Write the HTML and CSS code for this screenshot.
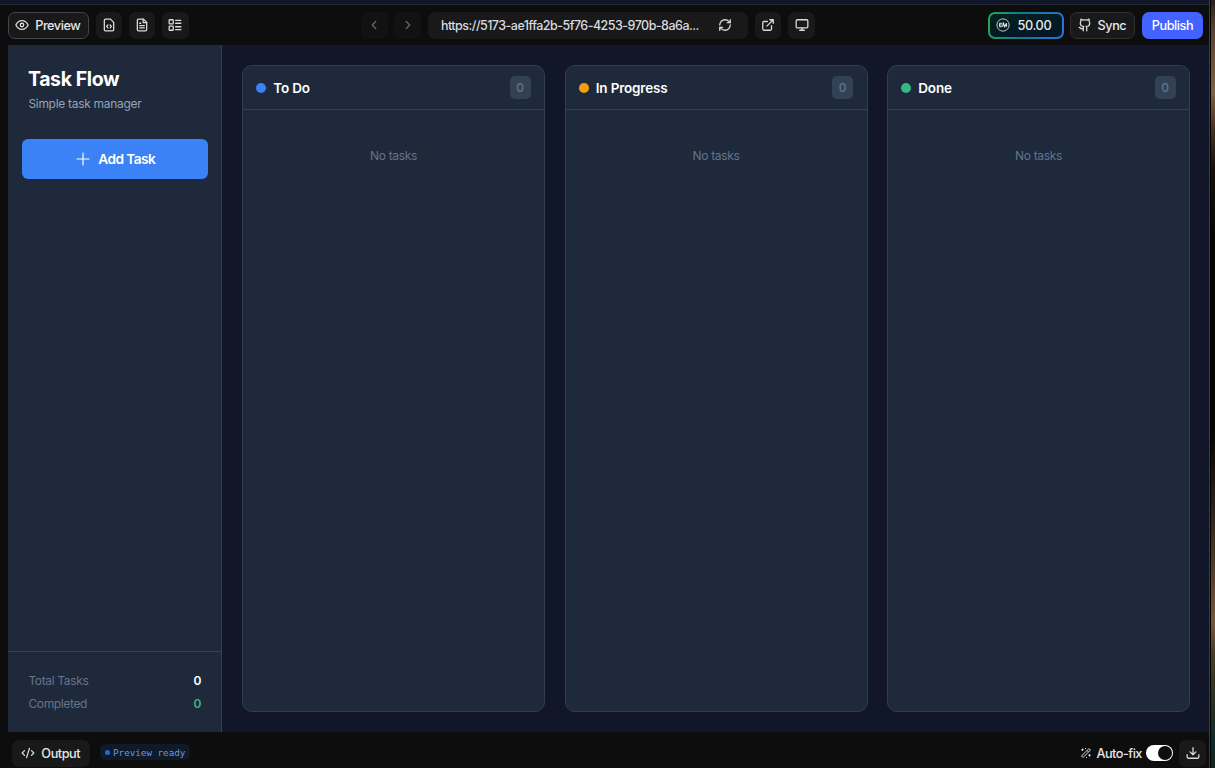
FILE: index.html
```html
<!DOCTYPE html>
<html lang="en">
<head>
<meta charset="utf-8">
<title>Task Flow</title>
<link rel="stylesheet" href="styles.css">
</head>
<body>
<div class="desktop">
<div class="window">
  <div class="top-strip"></div>
  <header class="toolbar">
    <div class="group left">
      <button class="btn preview"><svg class="icon" viewBox="0 0 24 24"><path d="M1.500 12s3.500-7.500 10.500-7.500S22.500 12 22.500 12s-3.500 7.500-10.500 7.500S1.500 12 1.500 12z"/><circle cx="12" cy="12" r="3"/></svg><span>Preview</span></button>
      <button class="btn square"><svg class="icon" viewBox="0 0 24 24"><path d="M14.500 2H6a2 2 0 0 0-2 2v16a2 2 0 0 0 2 2h12a2 2 0 0 0 2-2V7.500z"/><path d="M10 12l-2 2.500 2 2.500M14 12l2 2.500-2 2.500"/></svg></button>
      <button class="btn square"><svg class="icon" viewBox="0 0 24 24"><path d="M14.500 2H6a2 2 0 0 0-2 2v16a2 2 0 0 0 2 2h12a2 2 0 0 0 2-2V7.500z"/><path d="M14 2v6h6M8 9h2M8 13h8M8 17h8"/></svg></button>
      <button class="btn square"><svg class="icon" viewBox="0 0 24 24"><rect x="2" y="3" width="7" height="7" rx="1"/><rect x="2" y="14" width="7" height="7" rx="1"/><path d="M13 4h9M13 9h9M13 15h9M13 20h9"/></svg></button>
    </div>
    <div class="group nav">
      <button class="btn square dim"><svg class="icon" viewBox="0 0 24 24"><path d="M15 18l-6-6 6-6"/></svg></button>
      <button class="btn square dim"><svg class="icon" viewBox="0 0 24 24"><path d="M9 18l6-6-6-6"/></svg></button>
      <div class="address"><span>https://5173-ae1ffa2b-5f76-4253-970b-8a6a...</span><svg class="icon" viewBox="0 0 24 24"><path d="M3 12a9 9 0 0 1 9-9 9.750 9.750 0 0 1 6.740 2.740L21 8"/><path d="M21 3v5h-5M21 12a9 9 0 0 1-9 9 9.750 9.750 0 0 1-6.740-2.740L3 16"/><path d="M8 16H3v5"/></svg></div>
      <button class="btn square"><svg class="icon" viewBox="0 0 24 24"><path d="M15 3h6v6M10 14L21 3M18 13v6a2 2 0 0 1-2 2H5a2 2 0 0 1-2-2V8a2 2 0 0 1 2-2h6"/></svg></button>
      <button class="btn square"><svg class="icon" viewBox="0 0 24 24"><rect x="2" y="3" width="20" height="14" rx="2"/><path d="M8 21h8M12 17v4"/></svg></button>
    </div>
    <div class="group right">
      <button class="btn credits"><svg class="coin" viewBox="0 0 24 24"><circle cx="12" cy="12" r="10.500"/><path class="mark" d="M11 9H6.500q-1 3 0 6H10M6 12h4M11 15l2-6 2 6 3-6v6"/></svg><span>50.00</span></button>
      <button class="btn sync"><svg class="icon" viewBox="0 0 24 24"><path d="M15 22v-4a4.800 4.800 0 0 0-1-3.500c3 0 6-2 6-5.500.080-1.250-.270-2.480-1-3.500.280-1.150.280-2.350 0-3.500 0 0-1 0-3 1.500-2.640-.500-5.360-.500-8 0C6 2 5 2 5 2c-.300 1.150-.300 2.350 0 3.500A5.400 5.400 0 0 0 4 9c0 3.500 3 5.500 6 5.500-.390.490-.680 1.050-.850 1.650S8.930 17.380 9 18v4"/><path d="M9 18c-4.510 2-5-2-7-2"/></svg><span>Sync</span></button>
      <button class="btn publish">Publish</button>
    </div>
  </header>
  <div class="app">
    <aside class="sidebar">
      <h1>Task Flow</h1>
      <p class="subtitle">Simple task manager</p>
      <button class="add"><svg viewBox="0 0 14 14"><path d="M7 1v12M1 7h12"/></svg>Add Task</button>
      <div class="stats">
        <div class="stat"><span>Total Tasks</span><b>0</b></div>
        <div class="stat"><span>Completed</span><b class="green">0</b></div>
      </div>
    </aside>
    <main class="board">
      <section class="column"><div class="column-head"><i class="dot blue"></i><h2>To Do</h2><span class="count">0</span></div><p class="empty">No tasks</p></section>
      <section class="column"><div class="column-head"><i class="dot orange"></i><h2>In Progress</h2><span class="count">0</span></div><p class="empty">No tasks</p></section>
      <section class="column"><div class="column-head"><i class="dot emerald"></i><h2>Done</h2><span class="count">0</span></div><p class="empty">No tasks</p></section>
    </main>
  </div>
  <footer class="footer">
    <button class="btn output"><svg class="icon" viewBox="0 0 24 24"><path d="M18 16l4-4-4-4M6 8l-4 4 4 4M14.500 4l-5 16"/></svg><span>Output</span></button>
    <div class="status"><i></i>Preview ready</div>
    <div class="autofix"><svg class="wand" viewBox="0 0 24 24"><path d="M3 18L18 3l3 3L6 21zM14 7l3 3M5 3v5M2.500 5.500h5M19 14v5M16.500 16.500h5M11 2v2M10 3h2M13 20v2"/></svg><span>Auto-fix</span><span class="switch"></span></div>
    <button class="btn square"><svg class="icon" viewBox="0 0 24 24"><path d="M12 3v12M7 10l5 5 5-5M2 15v4a2 2 0 0 0 2 2h16a2 2 0 0 0 2-2v-4"/></svg></button>
  </footer>
</div>
<div class="wallpaper"></div>
</div>
</body>
</html>
```
FILE: styles.css
```css
* { box-sizing: border-box; }
body { margin: 0; font-family: Inter, "Liberation Sans", sans-serif; background: #0d0d0d; color: #e5e7eb; overflow: hidden; }
h1, h2, p { margin: 0; }
button { font: inherit; color: inherit; border: 0; padding: 0; }
.desktop { display: flex; width: 1215px; height: 768px; }
.window { display: flex; flex-direction: column; width: 1210px; border-right: 1px solid #3b3d43; }
.wallpaper { flex: 1; border-left: 1px solid #030303; background: linear-gradient(#2b2119 0, #5b432f 4%, #80603f 12%, #46301f 17%, #16100c 22%, #050403 32%, #080604 57%, #2b2018 66%, #574028 75%, #76573a 81%, #4b3c27 85%, #25301f 92%, #0a2b2b 97%, #172417 100%); }
.top-strip { height: 5px; background: #111528; border-bottom: 1px solid #20283a; }
.toolbar { display: grid; grid-template-columns: 353px 1fr 220px; height: 40px; padding: 0 6px 0 8px; align-items: center; background: #0d0d0d; }
.group { display: flex; align-items: center; gap: 6.600px; }
.right { justify-content: flex-end; }
.nav { gap: 6.900px; }
.btn { display: flex; flex: none; align-items: center; justify-content: center; height: 27px; border-radius: 7px; background: #191919; font-size: 12.700px; font-weight: 500; letter-spacing: -.45px; }
.icon { flex: none; width: 14px; height: 14px; fill: none; stroke: #d8dbe0; stroke-width: 2.200; stroke-linecap: round; stroke-linejoin: round; }
.square { width: 26.600px; }
.preview { width: 81px; gap: 6.500px; padding-right: 2px; border: 1px solid #41464c; }
.dim { background: #121212; }
.dim .icon { stroke: #65686d; }
.address { display: flex; align-items: center; justify-content: space-between; width: 320px; height: 27px; padding: 0 16px 0 13px; border-radius: 7px; background: #191919; font-size: 12.500px; font-weight: 500; letter-spacing: -.52px; color: #d8dbe0; }
.credits { width: 76px; gap: 7px; padding-right: 4px; border: 2px solid transparent; letter-spacing: -.35px; background: linear-gradient(170deg, #04211e, #031528) padding-box, linear-gradient(100deg, #25a65b, #17758d 45%, #2b74d9) border-box; }
.coin { width: 14px; height: 14px; fill: none; stroke: #d7e2e2; stroke-width: 1.500; }
.coin .mark { stroke-width: 2; }
.sync { width: 65px; gap: 6px; padding-right: 2px; border: 1px solid #303030; }
.publish { width: 61px; background: #4263ff; color: #fff; }
.app { display: flex; height: 687px; margin-left: 8px; background: #111629; }
.sidebar { display: flex; flex-direction: column; width: 214px; border-right: 1px solid #334155; background: #1e293b; }
h1 { margin: 22px 20px 0; font-size: 19.500px; line-height: 24px; font-weight: 700; letter-spacing: -.4px; color: #fff; }
.subtitle { margin: 4px 20px 0 20.400px; font-size: 12px; line-height: 17px; letter-spacing: -.3px; color: #94a3b8; }
.add { display: flex; align-items: center; justify-content: center; gap: 8px; height: 40px; margin: 27px 13px 0 13.500px; padding-left: 2px; border-radius: 6px; background: #3b82f6; color: #fff; font-size: 13.700px; font-weight: 600; letter-spacing: -.55px; }
.add svg { width: 14px; height: 14px; fill: none; stroke: #fff; stroke-width: 1.200; stroke-linecap: round; }
.stats { height: 81px; margin-top: auto; padding: 16.500px 19.500px 0 20px; border-top: 1px solid #334155; }
.stat { display: flex; justify-content: space-between; align-items: center; height: 23.500px; padding-left: .4px; font-size: 12px; letter-spacing: -.35px; color: #64748b; }
.stat b { font-weight: 600; letter-spacing: 0; color: #fff; }
.stat .green { color: #34b981; }
.board { display: grid; grid-template-columns: repeat(3, 1fr); gap: 19.500px; flex: 1; padding: 20px 19px 20px 20px; }
.column { border: 1px solid #303e50; border-radius: 10px; background: #1e293b; }
.column-head { display: flex; align-items: center; height: 44px; padding: 0 13.500px 0 13.300px; border-bottom: 1px solid #334155; }
.dot { width: 10px; height: 10px; margin-right: 7px; border-radius: 50%; }
.blue { background: #3b82f6; }
.orange { background: #f59e0b; }
.emerald { background: #34b981; }
h2 { font-size: 13.500px; font-weight: 600; color: #fff; letter-spacing: -.18px; }
.count { display: grid; place-items: center; width: 21px; height: 23px; margin-left: auto; border-radius: 5px; background: #334155; color: #64748b; font-size: 12px; font-weight: 500; }
.empty { margin-top: 37px; text-align: center; font-size: 12px; line-height: 17px; letter-spacing: -.35px; color: #64748b; }
.footer { display: flex; align-items: center; height: 36px; padding: 6px 3px 0 12px; background: #0d0d0d; }
.output { width: 78px; gap: 6.500px; padding-right: 1px; }
.status { display: flex; align-items: center; gap: 3px; height: 16px; margin: -2px 0 0 10px; padding: 0 5px; border-radius: 6px; background: #0e192a; color: #6c9dcb; font: 9.250px "DejaVu Sans Mono", monospace; }
.status i { width: 5px; height: 5px; border-radius: 50%; background: #2d68d2; }
.autofix { display: flex; align-items: center; gap: 4.500px; margin: 0 6px 0 auto; font-size: 12.700px; font-weight: 500; letter-spacing: -.5px; }
.wand { width: 12px; height: 12px; fill: none; stroke: #d1d5db; stroke-width: 2; }
.switch { display: flex; justify-content: flex-end; width: 27px; height: 16px; padding: 1px; border-radius: 8px; background: #fff; }
.switch::after { content: ""; width: 14px; height: 14px; border-radius: 50%; background: #0d0d0d; }
```
